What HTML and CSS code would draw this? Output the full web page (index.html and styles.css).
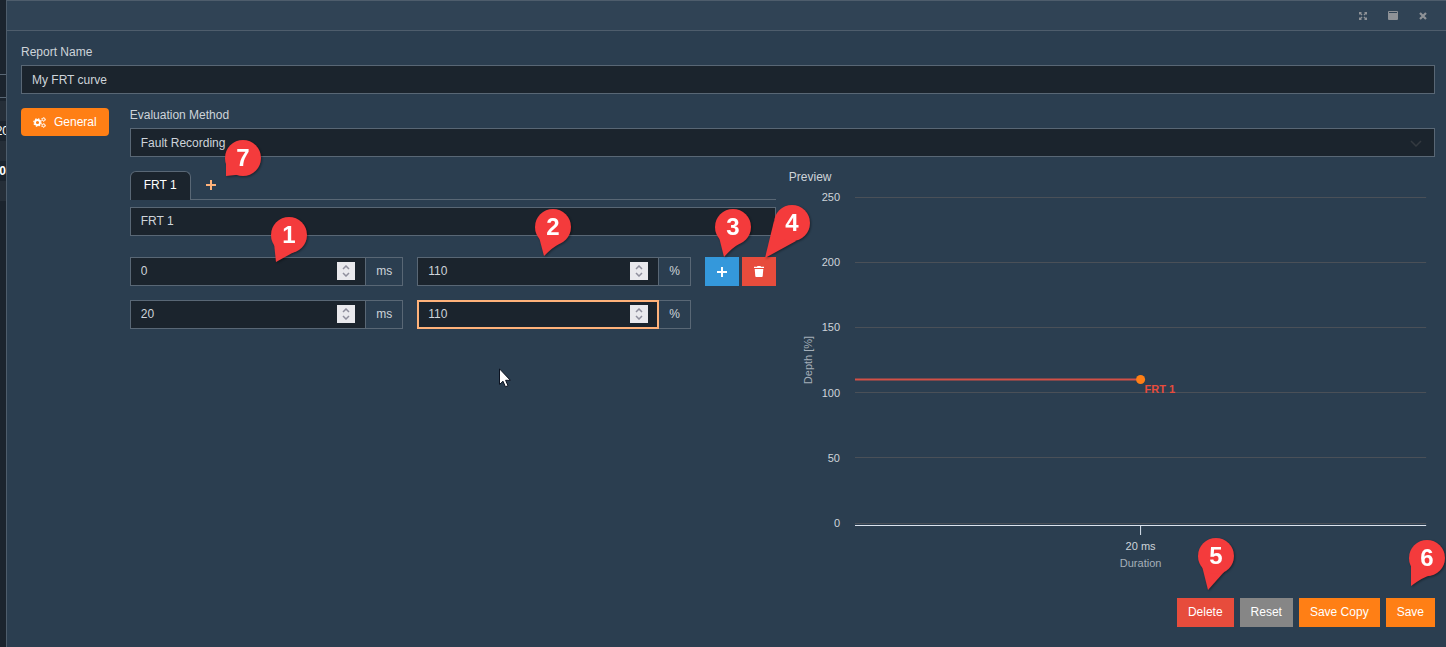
FILE: index.html
```html
<!DOCTYPE html>
<html lang="en">
<head>
  <meta charset="UTF-8" />
  <meta name="viewport" content="width=device-width, initial-scale=1.0"/>
  <title>FRT Report</title>
  <link rel="stylesheet" href="styles.css">
</head>
<body>

  <div class="behind">
    <div class="behind-bar"></div>
    <div class="behind-row"></div>
    <div class="behind-row"><span>20</span></div>
    <div class="behind-row"></div>
    <div class="behind-row"><b>0</b></div>
    <div class="behind-row"></div>
  </div>

  <div class="dialog">
    <div class="dialog-header">
      <button class="window-btn" aria-label="Full screen">
        <svg width="8" height="8" viewBox="0 0 8 8"><path d="M0 0h3L2 1l1.500 1.500-1 1L1 2 0 3zM8 0v3L7 2 5.500 3.500l-1-1L6 1 5 0zM0 8V5l1 1 1.500-1.500 1 1L2 7l1 1zM8 8H5l1-1-1.500-1.500 1-1L7 6l1-1z"/></svg>
      </button>
      <button class="window-btn" aria-label="Maximize">
        <svg width="10" height="9" viewBox="0 0 10 9"><path fill-rule="evenodd" d="M1 0h8a1 1 0 0 1 1 1v7a1 1 0 0 1-1 1H1a1 1 0 0 1-1-1V1a1 1 0 0 1 1-1zM1 1v1h8V1z"/></svg>
      </button>
      <button class="window-btn" aria-label="Close">
        <svg width="8" height="8" viewBox="0 0 8 8"><path d="M1 1l6 6M7 1L1 7" stroke="currentColor" stroke-width="2.200"/></svg>
      </button>
    </div>

    <div class="dialog-body">
      <label for="report-name">Report Name</label>
      <input class="control" type="text" id="report-name" value="My FRT curve">

      <div class="content">
        <button class="general">
          <svg width="13" height="12" viewBox="0 0 13 12">
            <circle cx="4.500" cy="6.500" r="2.500" fill="none" stroke="#fff" stroke-width="1.800"/>
            <circle cx="4.500" cy="6.500" r="3.700" fill="none" stroke="#fff" stroke-width="1.200" stroke-dasharray="1.500 1.406"/>
            <circle cx="10.500" cy="3.500" r="1.300" fill="none" stroke="#fff" stroke-width="1"/>
            <circle cx="10.500" cy="3.500" r="2" fill="none" stroke="#fff" stroke-width=".8" stroke-dasharray="1.047 1.047"/>
            <circle cx="10.500" cy="9.500" r="1.300" fill="none" stroke="#fff" stroke-width="1"/>
            <circle cx="10.500" cy="9.500" r="2" fill="none" stroke="#fff" stroke-width=".8" stroke-dasharray="1.047 1.047"/>
          </svg>
          General
        </button>

        <div class="main">
          <label for="method">Evaluation Method</label>
          <div class="select-box">
            <select class="control" id="method">
              <option>Fault Recording</option>
            </select>
            <svg class="chevron" width="12" height="7" viewBox="0 0 12 7"><path d="M1 1l5 5 5-5" fill="none" stroke="#343a40" stroke-width="1.500"/></svg>
          </div>

          <div class="columns">
            <div class="curve">
              <div class="tabs">
                <button class="tab">FRT 1</button>
                <button class="tab-add" aria-label="Add curve">
                  <svg width="10" height="10" viewBox="0 0 10 10"><path d="M5 0v10M0 5h10" stroke="currentColor" stroke-width="2"/></svg>
                </button>
                <svg class="pin pin-7" width="36" height="36" viewBox="0 0 36 36"><path d="M1 18L1 36 20 34z"/><circle cx="18" cy="18" r="18"/><text x="18" y="26">7</text></svg>
              </div>

              <input class="control" type="text" aria-label="Curve name" value="FRT 1">

              <div class="point">
                <div class="field">
                  <input class="control" type="number" aria-label="Duration 1" value="0">
                  <span class="spinner"><svg width="8" height="12" viewBox="0 0 8 12"><path d="M1 4l3-3 3 3M1 8l3 3 3-3"/></svg></span>
                  <span class="unit">ms</span>
                  <svg class="pin pin-1" width="36" height="36" viewBox="0 0 36 36"><path d="M3 26L5 45 23 35z"/><circle cx="18" cy="18" r="18"/><text x="18" y="26">1</text></svg>
                </div>
                <div class="field">
                  <input class="control" type="number" aria-label="Depth 1" value="110">
                  <span class="spinner"><svg width="8" height="12" viewBox="0 0 8 12"><path d="M1 4l3-3 3 3M1 8l3 3 3-3"/></svg></span>
                  <span class="unit">%</span>
                  <svg class="pin pin-2" width="36" height="36" viewBox="0 0 36 36"><path d="M4 28L9 47Q18 38 24 35z"/><circle cx="18" cy="18" r="18"/><text x="18" y="26">2</text></svg>
                </div>
                <div class="actions">
                  <button class="icon-btn blue" aria-label="Add point">
                    <svg width="10" height="10" viewBox="0 0 10 10"><path d="M5 0v10M0 5h10" stroke="#fff" stroke-width="2"/></svg>
                  </button>
                  <button class="icon-btn red" aria-label="Delete point">
                    <svg width="10" height="11" viewBox="0 0 10 11"><path d="M0 .8h3L3.500 0h3l.5.8h3V2H0zM.7 3h8.600l-.6 7.200q-.1.8-.9.8H2.200q-.8 0-.9-.8z" fill="#fff"/></svg>
                  </button>
                  <svg class="pin pin-3" width="36" height="36" viewBox="0 0 36 36"><path d="M4 28L9 48Q18 38 24 35z"/><circle cx="18" cy="18" r="18"/><text x="18" y="26">3</text></svg>
                  <svg class="pin pin-4" width="36" height="36" viewBox="0 0 36 36"><path d="M0 16L-9 53 22 36z"/><circle cx="18" cy="18" r="18"/><text x="18" y="26">4</text></svg>
                </div>
              </div>

              <div class="point">
                <div class="field">
                  <input class="control" type="number" aria-label="Duration 2" value="20">
                  <span class="spinner"><svg width="8" height="12" viewBox="0 0 8 12"><path d="M1 4l3-3 3 3M1 8l3 3 3-3"/></svg></span>
                  <span class="unit">ms</span>
                </div>
                <div class="field">
                  <input class="control active" type="number" aria-label="Depth 2" value="110">
                  <span class="spinner"><svg width="8" height="12" viewBox="0 0 8 12"><path d="M1 4l3-3 3 3M1 8l3 3 3-3"/></svg></span>
                  <span class="unit">%</span>
                </div>
                <div class="actions"></div>
              </div>

              <svg class="cursor" width="12" height="20" viewBox="0 0 12 20"><path d="M.5.8v15.700l3.500-3.300 2.400 5.600 2.600-1.100-2.400-5.400h4.800z" fill="#fff" stroke="#0b1220"/></svg>
            </div>

            <div class="preview">
              <div class="preview-title">Preview</div>
              <svg class="chart" height="385">
                <g class="grid">
                  <line x1="0" x2="100%" y1="11.500" y2="11.500"/>
                  <line x1="0" x2="100%" y1="76.500" y2="76.500"/>
                  <line x1="0" x2="100%" y1="141.500" y2="141.500"/>
                  <line x1="0" x2="100%" y1="206.500" y2="206.500"/>
                  <line x1="0" x2="100%" y1="271.500" y2="271.500"/>
                  <line x1="0" x2="100%" y1="337.500" y2="337.500"/>
                </g>
                <g class="y-labels">
                  <text x="-15" y="15">250</text>
                  <text x="-15" y="80">200</text>
                  <text x="-15" y="145">150</text>
                  <text x="-15" y="211">100</text>
                  <text x="-15" y="276">50</text>
                  <text x="-15" y="341">0</text>
                </g>
                <text class="axis-title" transform="translate(-43 174) rotate(-90)">Depth [%]</text>
                <line class="axis" x1="0" x2="100%" y1="339.500" y2="339.500"/>
                <line class="series" x1="0" x2="50%" y1="193.500" y2="193.500"/>
                <svg x="50%" overflow="visible">
                  <line class="axis" x1="0" x2="0" y1="340" y2="349"/>
                  <text class="series-label" x="4" y="207">FRT 1</text>
                  <circle class="dot" cx="0" cy="193.500" r="4.500"/>
                  <text class="x-label" x="0" y="364">20 ms</text>
                  <text class="axis-title" x="0" y="381">Duration</text>
                </svg>
              </svg>
            </div>
          </div>
        </div>
      </div>

      <div class="dialog-footer">
        <button class="btn red">Delete
          <svg class="pin pin-5" width="36" height="36" viewBox="0 0 36 36"><path d="M4 28L10 52 26 34z"/><circle cx="18" cy="18" r="18"/><text x="18" y="26">5</text></svg>
        </button>
        <button class="btn gray">Reset</button>
        <button class="btn orange">Save Copy</button>
        <button class="btn orange">Save
          <svg class="pin pin-6" width="36" height="36" viewBox="0 0 36 36"><path d="M2 24L2 46Q14 37 22 35z"/><circle cx="18" cy="18" r="18"/><text x="18" y="26">6</text></svg>
        </button>
      </div>
    </div>
  </div>

</body>
</html>
```
FILE: styles.css
```css
* {
  box-sizing: border-box;
}

body {
  margin: 0;
  display: flex;
  min-height: 100vh;
  background-color: #1b242e;
  color: #ced4da;
  font-family: "Liberation Sans", Arial, sans-serif;
  font-size: 12px;
  line-height: 18px;
}

button, input, select {
  font: inherit;
  margin: 0;
}

button {
  border: none;
  padding: 0;
  background: none;
  color: #fff;
  cursor: pointer;
}

svg {
  display: block;
}

/* table showing behind the dialog */
.behind {
  width: 6px;
  flex: none;
  padding-top: 74px;
  overflow: hidden;
  color: #fff;
}

.behind-bar {
  height: 24px;
  margin-bottom: 3px;
  border-top: 1px solid #596775;
  border-bottom: 1px solid #596775;
}

.behind-row {
  display: flex;
  justify-content: flex-end;
  height: 20px;
  line-height: 20px;
}

.behind-row span {
  margin-right: -3px;
}

.behind-row:nth-child(even) {
  background-color: #252e38;
}

.dialog {
  flex: 1;
  min-width: 0;
  background-color: #2b3e50;
  border-left: 1px solid #4e5d6c;
  border-top: 1px solid #4e5d6c;
}

.dialog-header {
  display: flex;
  justify-content: flex-end;
  align-items: center;
  gap: 10px;
  height: 30px;
  padding-right: 13px;
  background-color: #304355;
  border-bottom: 1px solid #4e5d6c;
}

.window-btn {
  display: flex;
  justify-content: center;
  align-items: center;
  width: 20px;
  height: 20px;
  color: #8e9297;
}

.window-btn svg {
  fill: currentColor;
}

.dialog-body {
  padding: 12px 11px 20px 14px;
}

label {
  display: block;
  margin-bottom: 4px;
}

.control {
  display: block;
  width: 100%;
  height: 29px;
  padding: 0 10px;
  background-color: #1b242d;
  border: 1px solid #596775;
  border-radius: 0;
  color: #ced4da;
  outline: none;
  appearance: none;
}

.content {
  display: flex;
  align-items: flex-start;
  gap: 21px;
  margin-top: 12px;
}

.general {
  display: flex;
  align-items: center;
  gap: 8px;
  flex: none;
  height: 28px;
  margin-top: 2px;
  padding: 0 12px;
  border-radius: 4px;
  background-color: #ff7f15;
}

.main {
  flex: 1;
  min-width: 0;
}

.select-box {
  position: relative;
}

.chevron {
  position: absolute;
  right: 13px;
  top: 12px;
}

.columns {
  display: grid;
  grid-template-columns: 1fr 1fr;
  gap: 13px;
  margin-top: 11px;
}

.curve {
  position: relative;
  padding-top: 3px;
}

.curve .control {
  padding-bottom: 2px;
}

.tabs {
  position: relative;
  display: flex;
  height: 29px;
  margin-bottom: 7px;
  border-bottom: 1px solid #596775;
}

.tab {
  height: 29px;
  padding: 0 13px 2px;
  background-color: #1b242d;
  border: 1px solid #596775;
  border-bottom: none;
  border-radius: 6px 6px 0 0;
}

.tab-add {
  display: flex;
  align-items: center;
  padding: 0 15px;
  color: #ffb27a;
}

.point {
  display: flex;
  gap: 14px;
  margin-top: 14px;
}

.control + .point {
  margin-top: 21px;
}

.field {
  position: relative;
  display: flex;
  flex: 1;
  min-width: 0;
}

.field .control {
  flex: 1;
  min-width: 0;
  -moz-appearance: textfield;
}

.field .control::-webkit-inner-spin-button {
  appearance: none;
}

.field .active {
  padding: 0 9px 2px;
  border: 2px solid #ffb27a;
}

.spinner {
  display: flex;
  align-items: center;
  justify-content: center;
  width: 18px;
  height: 18px;
  margin: 5px 11px 0 -29px;
  background-color: #e9e9ed;
  z-index: 1;
}

.spinner path {
  fill: none;
  stroke: #8f8f9d;
  stroke-width: 1.5;
}

.unit {
  height: 29px;
  padding: 0 10px;
  line-height: 27px;
  border: 1px solid #596775;
  border-left: none;
}

.actions {
  position: relative;
  display: flex;
  gap: 3px;
  width: 71px;
}

.icon-btn {
  display: flex;
  align-items: center;
  justify-content: center;
  width: 34px;
  height: 29px;
}

.blue { background-color: #3498db; }
.red { background-color: #e74c3c; }
.gray { background-color: #868686; }
.orange { background-color: #ff7f15; }

/* chart */
.preview-title {
  height: 18px;
}

.chart {
  width: calc(100% - 75px);
  margin-left: 66px;
  overflow: visible;
  font-size: 11px;
}

.chart text {
  fill: #ced4da;
}

.grid line {
  stroke: #4a5058;
}

.y-labels text {
  text-anchor: end;
}

.axis {
  stroke: #dbe3ee;
}

.series {
  stroke: #d35046;
  stroke-width: 2;
}

.dot {
  fill: #ff7f15;
}

.x-label,
.axis-title {
  text-anchor: middle;
}

.chart .axis-title {
  fill: #a5afb9;
}

.chart .series-label {
  fill: #e74c3c;
  font-weight: bold;
}

.dialog-footer {
  display: flex;
  justify-content: flex-end;
  gap: 6px;
  margin-top: 27px;
}

.btn {
  position: relative;
  height: 29px;
  padding: 0 11px 2px;
}

/* numbered callouts */
.pin {
  position: absolute;
  z-index: 2;
  overflow: visible;
  fill: #f43b3c;
  filter: drop-shadow(1px 1px 1px rgba(0, 0, 0, 0.4));
  pointer-events: none;
}

.pin text {
  fill: #fff;
  font-family: "Liberation Sans", Arial, sans-serif;
  font-size: 24px;
  font-weight: bold;
  text-anchor: middle;
}

.pin-1 { left: 141px; top: -40px; }
.pin-2 { left: 118px; top: -48px; }
.pin-3 { left: 10px; top: -48px; }
.pin-4 { left: 69px; top: -52px; }
.pin-5 { left: 21px; top: -60px; }
.pin-6 { left: 23px; top: -58px; }
.pin-7 { left: 95px; top: -31px; }

.cursor {
  position: absolute;
  left: 369px;
  top: 200px;
}
```
